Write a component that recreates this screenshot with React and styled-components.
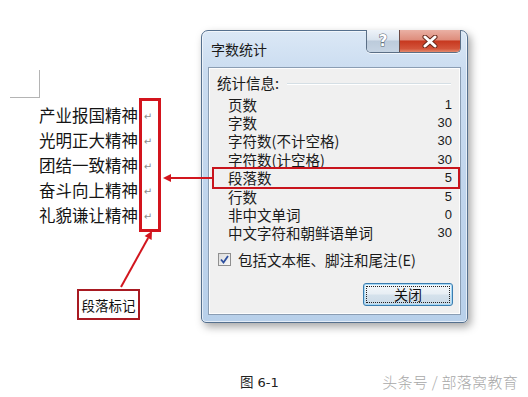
import React from "react";
import styled, { createGlobalStyle } from "styled-components";

const GlobalStyle = createGlobalStyle`
  *, *::before, *::after {
    box-sizing: border-box;
  }
  html, body {
    margin: 0;
    padding: 0;
    background: #ffffff;
  }
  body {
    font-family: "Noto Sans CJK SC", "Noto Sans", sans-serif;
    color: #111;
  }
`;

const cjk = `"Noto Sans CJK SC", "Noto Sans", sans-serif`;

const Page = styled.div`
  width: 528px;
  height: 397px;
  display: flex;
  flex-direction: column;
  overflow: hidden;
`;

const Stage = styled.div`
  position: relative;
  flex: 0 0 370px;
  display: flex;
  align-items: flex-start;
`;

const DocColumn = styled.div`
  flex: 0 0 201px;
  padding: 70px 0 0 10px;
  display: flex;
  flex-direction: column;
  align-items: flex-start;
`;

const CornerMark = styled.div`
  width: 30px;
  height: 28px;
  border-right: 1px solid #b4b4b4;
  border-bottom: 1px solid #b4b4b4;
`;

const Paragraphs = styled.div`
  display: flex;
  align-items: flex-start;
  margin-left: 29px;
`;

const TextColumn = styled.div`
  padding-top: 4.5px;
  font-family: ${cjk};
  font-size: 16.5px;
  color: #141414;
  margin-right: 1px;
`;

const TextLine = styled.div`
  height: 25px;
  line-height: 25px;
`;

const MarkColumn = styled.div`
  border: 3px solid #d3141d;
  padding: 1.5px 0;
  width: 22px;
  display: flex;
  flex-direction: column;
  align-items: center;
`;

const ReturnMark = styled.span`
  display: block;
  height: 25px;
  line-height: 27px;
  font-family: "DejaVu Sans", sans-serif;
  font-size: 10px;
  color: #8a8a8a;
  margin-left: -4px;
`;

const NoteBox = styled.div`
  margin: 57px 0 0 67px;
  width: 63px;
  height: 31px;
  border: 2px solid #a81a22;
  display: flex;
  align-items: center;
  justify-content: center;
  font-family: ${cjk};
  font-size: 13.5px;
  line-height: 16px;
  color: #111;
`;

const Dialog = styled.div`
  margin-top: 30px;
  width: 267px;
  height: 293px;
  border: 1px solid #55708e;
  border-radius: 7px 7px 5px 5px;
  background: linear-gradient(180deg, #dbe8f6 0%, #cadcf0 14%, #bfd4ec 60%, #b8d0ea 100%);
  box-shadow: 3px 4px 9px rgba(0, 0, 0, 0.35), inset 0 0 0 1px rgba(255, 255, 255, 0.6);
  padding: 0 6px 7px 6px;
  display: flex;
  flex-direction: column;
`;

const TitleBar = styled.div`
  flex: 0 0 36px;
  display: flex;
  align-items: flex-start;
`;

const Title = styled.div`
  margin: 10px 0 0 3px;
  font-family: ${cjk};
  font-size: 14px;
  line-height: 16px;
  color: #1a1a1a;
  flex: 1;
`;

const CaptionButtons = styled.div`
  display: flex;
  margin-top: -1px;
  border: 1px solid #5b6f86;
  border-top: none;
  border-radius: 0 0 5px 5px;
  overflow: hidden;
  box-shadow: 0 1px 0 rgba(255, 255, 255, 0.7);
`;

const CaptionButton = styled.div`
  width: ${(p) => p.$w}px;
  height: 22px;
  display: flex;
  align-items: center;
  justify-content: center;
  background: ${(p) =>
    p.$danger
      ? "linear-gradient(180deg, #eab0a4 0%, #de8d7c 45%, #c7381f 50%, #d3543a 85%, #e28a6e 100%)"
      : "linear-gradient(180deg, #eef3f9 0%, #d9e3ee 45%, #bccbdb 50%, #c6d4e3 100%)"};
  border-left: ${(p) => (p.$danger ? "1px solid #6b4a44" : "none")};
`;

const HelpGlyph = styled.span`
  font-family: "DejaVu Sans", sans-serif;
  font-weight: bold;
  font-size: 15px;
  line-height: 15px;
  color: #ffffff;
  -webkit-text-stroke: 1px #56606c;
  paint-order: stroke fill;
`;

const Panel = styled.div`
  flex: 1;
  background: #f0f0f0;
  border: 1px solid #8a9db3;
  box-shadow: inset 0 0 0 1px #fdfdfd;
  padding: 6px 8px 0 8px;
  display: flex;
  flex-direction: column;
`;

const GroupHeader = styled.div`
  display: flex;
  align-items: center;
  height: 18px;
  font-family: ${cjk};
  font-size: 14.5px;
  line-height: 18px;
  color: #1a1a1a;
  &::after {
    content: "";
    flex: 1;
    margin: 1px 1px 0 8px;
    border-top: 1px solid #d5dfe5;
    border-bottom: 1px solid #ffffff;
  }
`;

const StatList = styled.div`
  margin-top: 3px;
  display: flex;
  flex-direction: column;
`;

const StatRow = styled.div`
  display: flex;
  align-items: center;
  justify-content: space-between;
  height: ${(p) => (p.$highlight ? "22px" : "18.4px")};
  margin: ${(p) => (p.$highlight ? "-1.8px -8px -1.8px -5px" : "0")};
  padding: ${(p) => (p.$highlight ? "0 6px 0 14px" : "0 0 0 11px")};
  border: ${(p) => (p.$highlight ? "2px solid #c8141c" : "none")};
  font-family: ${cjk};
  font-size: 14.5px;
  line-height: 17px;
  color: #1a1a1a;
`;

const StatValue = styled.span`
  font-family: "Liberation Sans", Arial, sans-serif;
  font-size: 13px;
  line-height: 15px;
  color: #1a1a1a;
`;

const CheckRow = styled.label`
  margin-top: 8px;
  height: 18px;
  display: flex;
  align-items: center;
  gap: 7px;
  padding-left: 1px;
  font-family: ${cjk};
  font-size: 14.5px;
  line-height: 17px;
  color: #1a1a1a;
`;

const CheckBox = styled.span`
  width: 13px;
  height: 13px;
  border: 1px solid #8f8f8f;
  background: linear-gradient(135deg, #dcdcdc 0%, #f8f8f8 100%);
  display: flex;
  align-items: center;
  justify-content: center;
`;

const ButtonRow = styled.div`
  margin-top: 15px;
  display: flex;
  justify-content: flex-end;
`;

const PushButton = styled.button`
  width: 90px;
  height: 23px;
  margin-right: -1px;
  padding: 2px;
  border: 1px solid #3b7db0;
  border-radius: 3px;
  background: linear-gradient(180deg, #f4f8fb 0%, #e7eef4 48%, #d5e2ec 52%, #cbdae7 100%);
  box-shadow: inset 0 0 0 1px #a6d9f6;
  cursor: default;
`;

const FocusRect = styled.span`
  display: flex;
  align-items: center;
  justify-content: center;
  height: 100%;
  border: 1px dotted #222;
  font-family: ${cjk};
  font-size: 14px;
  line-height: 15px;
  color: #111;
`;

const Overlay = styled.svg`
  position: absolute;
  left: 0;
  top: 0;
  pointer-events: none;
`;

const Footer = styled.div`
  flex: 1;
  display: flex;
  align-items: center;
  padding: 0 10px 4px 240px;
`;

const Caption = styled.span`
  font-family: ${cjk};
  font-size: 13.5px;
  line-height: 16px;
  color: #222;
  & b {
    font-weight: normal;
    font-family: "DejaVu Sans", sans-serif;
    font-size: 13px;
    margin-left: 4px;
  }
`;

const Watermark = styled.span`
  margin-left: auto;
  font-family: ${cjk};
  font-size: 15px;
  line-height: 18px;
  font-weight: 300;
  color: #a8a8a8;
  letter-spacing: 0.3px;
`;

const lines = ["产业报国精神", "光明正大精神", "团结一致精神", "奋斗向上精神", "礼貌谦让精神"];

const stats = [
  ["页数", "1"],
  ["字数", "30"],
  ["字符数(不计空格)", "30"],
  ["字符数(计空格)", "30"],
  ["段落数", "5", true],
  ["行数", "5"],
  ["非中文单词", "0"],
  ["中文字符和朝鲜语单词", "30"],
];

const Arrow = ({ x1, y1, x2, y2 }) => {
  const a = Math.atan2(y2 - y1, x2 - x1);
  const len = 8;
  const w = 4;
  const bx = x2 - len * Math.cos(a);
  const by = y2 - len * Math.sin(a);
  const px = -Math.sin(a) * w;
  const py = Math.cos(a) * w;
  return (
    <g>
      <line x1={x1} y1={y1} x2={bx} y2={by} stroke="#d2161e" strokeWidth="2" />
      <polygon points={`${x2},${y2} ${bx + px},${by + py} ${bx - px},${by - py}`} fill="#d2161e" />
    </g>
  );
};

export default function App() {
  return (
    <Page>
      <GlobalStyle />
      <Stage>
        <DocColumn>
          <CornerMark />
          <Paragraphs>
            <TextColumn>
              {lines.map((l) => (
                <TextLine key={l}>{l}</TextLine>
              ))}
            </TextColumn>
            <MarkColumn>
              {lines.map((l) => (
                <ReturnMark key={l}>↵</ReturnMark>
              ))}
            </MarkColumn>
          </Paragraphs>
          <NoteBox>段落标记</NoteBox>
        </DocColumn>

        <Dialog>
          <TitleBar>
            <Title>字数统计</Title>
            <CaptionButtons>
              <CaptionButton $w={32}>
                <HelpGlyph>?</HelpGlyph>
              </CaptionButton>
              <CaptionButton $w={61} $danger>
                <svg width="16" height="13" viewBox="0 0 16 13">
                  <path d="M3 2 L13 11 M13 2 L3 11" stroke="#6a2a1c" strokeWidth="5" strokeLinecap="round" />
                  <path d="M3 2 L13 11 M13 2 L3 11" stroke="#ffffff" strokeWidth="3" strokeLinecap="round" />
                </svg>
              </CaptionButton>
            </CaptionButtons>
          </TitleBar>
          <Panel>
            <GroupHeader>统计信息:</GroupHeader>
            <StatList>
              {stats.map(([label, value, hl]) => (
                <StatRow key={label} $highlight={hl}>
                  <span>{label}</span>
                  <StatValue>{value}</StatValue>
                </StatRow>
              ))}
            </StatList>
            <CheckRow>
              <CheckBox>
                <svg width="9" height="9" viewBox="0 0 9 9">
                  <path d="M1 4.5 L3.5 7.5 L8 1" fill="none" stroke="#2d4f9e" strokeWidth="1.8" />
                </svg>
              </CheckBox>
              包括文本框、脚注和尾注(E)
            </CheckRow>
            <ButtonRow>
              <PushButton>
                <FocusRect>关闭</FocusRect>
              </PushButton>
            </ButtonRow>
          </Panel>
        </Dialog>

        <Overlay width="528" height="370">
          <Arrow x1={212} y1={178} x2={163} y2={178} />
          <Arrow x1={121} y1={287} x2={152} y2={231} />
        </Overlay>
      </Stage>
      <Footer>
        <Caption>
          图<b>6-1</b>
        </Caption>
        <Watermark>头条号 / 部落窝教育</Watermark>
      </Footer>
    </Page>
  );
}
